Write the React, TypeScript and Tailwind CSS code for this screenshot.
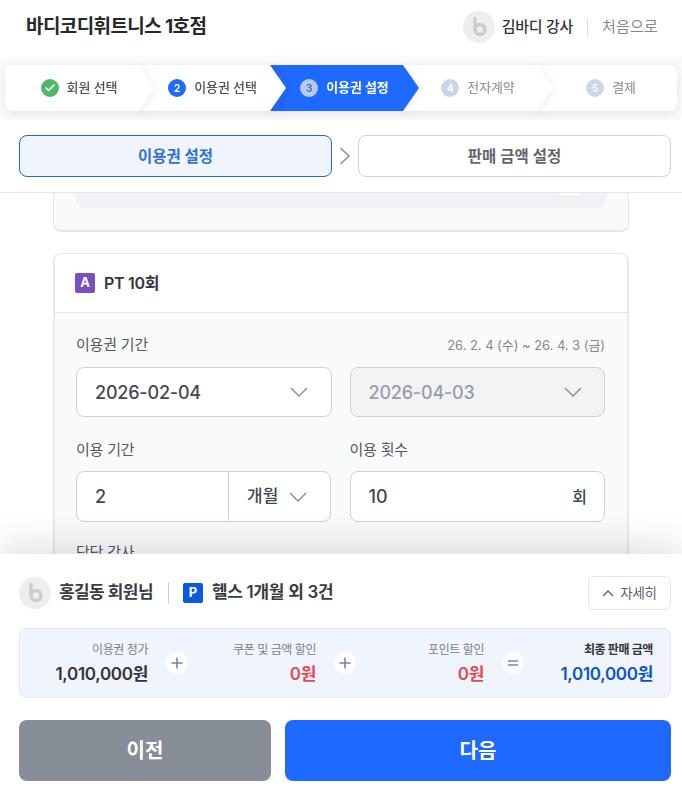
import React from "react";
import { Check } from "lucide-react";

const steps = [
  { id: 1, title: "회원 선택", state: "done", width: "w-[150px]", z: "z-[5]" },
  { id: 2, title: "이용권 선택", state: "passed", width: "w-[147px]", z: "z-[4]" },
  { id: 3, title: "이용권 설정", state: "active", width: "w-[149px]", z: "z-[3]" },
  { id: 4, title: "전자계약", state: "todo", width: "w-[150px]", z: "z-[2]" },
  { id: 5, title: "결제", state: "todo", width: "w-[140px]", z: "z-[1]" },
];

function LogoAvatar({ size }: { size: string }) {
  return (
    <svg viewBox="0 0 32 32" className={size}>
      <circle cx="16" cy="16" r="16" fill="#eeeeee" />
      <circle cx="17" cy="18.5" r="5" fill="none" stroke="#cccccc" strokeWidth="3.4" />
      <path d="M12 7.5V18.5" stroke="#cccccc" strokeWidth="3.4" strokeLinecap="round" />
    </svg>
  );
}

function Chevron({ className }: { className: string }) {
  return (
    <svg viewBox="0 0 18 10" fill="none" className={className}>
      <path d="M1 1L9 9L17 1" stroke="currentColor" strokeWidth="1.5" />
    </svg>
  );
}

function StepItem({ step }: { step: (typeof steps)[number] }) {
  const active = step.state === "active";
  const todo = step.state === "todo";
  return (
    <div className={`relative shrink-0 ${step.z} ${step.width} ${step.id > 1 ? "-ml-4" : ""} drop-shadow-[0_2px_5px_rgba(0,0,0,0.09)]`}>
      {step.id === 5 ? (
        <div className="flex h-[46px] items-center justify-center gap-2 rounded-r-lg bg-white pl-2 text-[13px] font-medium tracking-[-0.1px] text-[#9a9ea6]">
          <span className="flex size-[18px] items-center justify-center rounded-full bg-[#cdd6e8] text-[10px] font-bold text-white">{step.id}</span>
          <span>{step.title}</span>
        </div>
      ) : (
        <div
          className={`flex h-[46px] items-center justify-center gap-2 text-[13px] font-medium tracking-[-0.1px] [clip-path:polygon(0_0,calc(100%-16px)_0,100%_50%,calc(100%-16px)_100%,0_100%)] ${
            active ? "bg-[#1e69ff] font-semibold text-white" : "bg-white"
          } ${todo ? "text-[#9a9ea6]" : ""} ${step.state === "done" || step.state === "passed" ? "text-[#4e5159]" : ""} ${
            step.id === 1 ? "rounded-l-lg pr-[2px]" : ""
          }`}
        >
          {step.state === "done" ? (
            <span className="flex size-[18px] items-center justify-center rounded-full bg-[#4fb96b] text-white">
              <Check size={12} strokeWidth={3.5} />
            </span>
          ) : (
            <span
              className={`flex size-[18px] items-center justify-center rounded-full text-[10px] font-bold ${
                step.state === "passed" ? "bg-[#1e69ff] text-white" : ""
              } ${active ? "bg-[#bcc9e6] text-[#3f6fd6]" : ""} ${todo ? "bg-[#cdd6e8] text-white" : ""}`}
            >
              {step.id}
            </span>
          )}
          <span>{step.title}</span>
        </div>
      )}
    </div>
  );
}

function SelectBox({ value, disabled }: { value: string; disabled?: boolean }) {
  return (
    <div
      className={`flex h-[50px] items-center justify-between rounded-lg border border-[#cfd2d8] pl-[18px] text-[18px] font-medium tracking-[-0.2px] ${
        disabled ? "bg-[#f2f3f5] pr-[22px] text-[#9a9ea6]" : "bg-white pr-[23px] text-[#45484f]"
      }`}
    >
      <span>{value}</span>
      <Chevron className="h-[10px] w-[18px] text-[#8d9097]" />
    </div>
  );
}

function SummaryItem({ label, value, tone }: { label: string; value: string; tone: string }) {
  return (
    <div className="flex w-[128px] flex-col items-end">
      <span className="text-[12px] leading-[18px] tracking-[-0.45px] text-[#7d8087]">{label}</span>
      <span className={`mt-[3px] text-[17px] font-semibold leading-[24px] tracking-[-0.3px] ${tone}`}>{value}</span>
    </div>
  );
}

function Operator({ equals }: { equals?: boolean }) {
  return (
    <span className="ml-[18px] flex size-[22px] shrink-0 items-center justify-center rounded-full bg-white text-[#7188b8]">
      <svg viewBox="0 0 12 12" fill="none" className="size-3">
        {equals ? (
          <path d="M1 4H11M1 8H11" stroke="currentColor" strokeWidth="1.6" />
        ) : (
          <path d="M0.5 6H11.5M6 0.5V11.5" stroke="currentColor" strokeWidth="1.6" />
        )}
      </svg>
    </span>
  );
}

export default function App() {
  return (
    <div className="flex h-[801px] w-[682px] flex-col overflow-hidden bg-white font-['Inter','Noto_Sans_CJK_KR',sans-serif] text-[#2b2d33]">
      <header className="flex h-[56px] shrink-0 items-center justify-between pb-[2px] pl-[26px] pr-[24px]">
        <h1 className="text-[19px] font-bold tracking-[-0.6px] text-[#26282d]">바디코디휘트니스 1호점</h1>
        <div className="flex items-center">
          <LogoAvatar size="size-8" />
          <span className="ml-[7px] text-[15px] font-medium tracking-[-0.3px] text-[#33353a]">김바디 강사</span>
          <span className="ml-[14px] mr-[14px] h-[18px] w-px bg-[#dcdee2]" />
          <span className="text-[15px] tracking-[0.2px] text-[#85888f]">처음으로</span>
        </div>
      </header>

      <div className="flex h-[64px] shrink-0 items-center bg-[#fafafa] pl-[5px]">
        {steps.map((step) => (
          <StepItem key={step.id} step={step} />
        ))}
      </div>

      <div className="flex h-[73px] shrink-0 items-start border-b border-[#e4e6ea] pl-[19px] pt-[15px]">
        <button className="h-[42px] w-[313px] shrink-0 rounded-lg border border-[#1e69d8] bg-[#eff4fd] pt-px text-[15.5px] font-semibold text-[#2f6fd8]">
          이용권 설정
        </button>
        <svg viewBox="0 0 12 18" fill="none" className="ml-[7px] mr-[7px] mt-[12px] h-[18px] w-[12px] shrink-0 text-[#8d9097]">
          <path d="M1.5 1L10 9L1.5 17" stroke="currentColor" strokeWidth="1.6" />
        </svg>
        <button className="h-[42px] w-[313px] shrink-0 rounded-lg border border-[#cfd2d8] bg-white pt-px text-[15.5px] font-semibold text-[#63666d]">
          판매 금액 설정
        </button>
      </div>

      <main className="min-h-0 flex-1 overflow-hidden px-[53px]">
        <div className="h-[39px] rounded-b-lg border-x border-b-2 border-[#e4e6ea] bg-[#f9fafc] px-[22px]">
          <div className="flex h-[15px] justify-end rounded-b-lg bg-[#f0f2f6] pr-[23px]">
            <span className="h-[4px] w-[25px] rounded-b border-x border-b border-[#e4e6ea] bg-white" />
          </div>
        </div>

        <section className="mt-[21px] overflow-hidden rounded-t-lg border-x-2 border-t border-[#e8e9ec]">
          <div className="flex h-[59px] items-center gap-[9px] border-b border-[#e4e6ea] bg-white pl-[20px]">
            <span className="flex size-5 items-center justify-center rounded-[2px] bg-[#7a4fc4] text-[13px] font-bold text-white">A</span>
            <span className="text-[16px] font-semibold tracking-[-0.3px] text-[#33353a]">PT 10회</span>
          </div>
          <div className="grid grid-cols-2 gap-x-[18px] bg-[#f9fafc] pl-[21px] pr-[22px] pt-[21px]">
            <div className="col-span-2 flex items-center justify-between">
              <label className="text-[15px] leading-[22px] tracking-[-0.2px] text-[#54575e]">이용권 기간</label>
              <span className="text-[13px] leading-[22px] tracking-[-0.05px] text-[#85888f]">26. 2. 4 (수) ~ 26. 4. 3 (금)</span>
            </div>
            <div className="mt-[11px]">
              <SelectBox value="2026-02-04" />
            </div>
            <div className="mt-[11px]">
              <SelectBox value="2026-04-03" disabled />
            </div>
            <label className="mt-[22px] text-[15px] leading-[22px] tracking-[-0.2px] text-[#54575e]">이용 기간</label>
            <label className="mt-[22px] text-[15px] leading-[22px] tracking-[-0.2px] text-[#54575e]">이용 횟수</label>
            <div className="mt-[10px] flex h-[51px] w-[255px] items-center rounded-lg border border-[#cfd2d8] bg-white text-[#45484f]">
              <span className="flex-1 pl-[18px] text-[18px] font-medium">2</span>
              <div className="flex h-full w-[102px] items-center gap-[11px] border-l border-[#cfd2d8] pl-[18px] text-[17px] font-medium">
                <span>개월</span>
                <Chevron className="h-[10px] w-[18px] text-[#8d9097]" />
              </div>
            </div>
            <div className="mt-[10px] flex h-[51px] items-center justify-between rounded-lg border border-[#cfd2d8] bg-white pl-[18px] pr-[17px] text-[#45484f]">
              <span className="text-[18px] font-medium">10</span>
              <span className="text-[16px] font-medium">회</span>
            </div>
            <label className="col-span-2 mt-[20px] text-[15px] leading-[22px] tracking-[-0.2px] text-[#54575e]">담당 강사</label>
          </div>
        </section>
      </main>

      <footer className="relative z-10 flex h-[247px] shrink-0 flex-col bg-white pl-[19px] pr-[11px] shadow-[0_-8px_36px_rgba(0,0,0,0.13)]">
        <div className="mt-[22px] flex h-[34px] items-center">
          <LogoAvatar size="size-8" />
          <span className="ml-2 text-[17px] font-semibold tracking-[-0.6px] text-[#3a3c42]">홍길동 회원님</span>
          <span className="ml-[15px] mr-[14px] h-[22px] w-px bg-[#cfd2d8]" />
          <span className="flex size-5 items-center justify-center rounded-[2px] bg-[#0a5ae0] text-[13px] font-bold text-white">P</span>
          <span className="ml-[9px] text-[17px] font-semibold tracking-[-0.3px] text-[#3a3c42]">헬스 1개월 외 3건</span>
          <button className="ml-auto flex h-[34px] w-[83px] items-center justify-center gap-[6px] rounded-md border border-[#e4e6ea] text-[13.5px] tracking-[-0.2px] text-[#5f6269]">
            <svg viewBox="0 0 12 7" fill="none" className="h-[7px] w-[12px]">
              <path d="M1 6L6 1L11 6" stroke="currentColor" strokeWidth="1.4" />
            </svg>
            자세히
          </button>
        </div>

        <div className="mt-[18px] flex h-[70px] items-center rounded-lg border border-[#e4e7ee] bg-[#f0f4fd] pr-[17px]">
          <SummaryItem label="이용권 정가" value="1,010,000원" tone="text-[#33353a]" />
          <Operator />
          <SummaryItem label="쿠폰 및 금액 할인" value="0원" tone="text-[#e5484d]" />
          <Operator />
          <SummaryItem label="포인트 할인" value="0원" tone="text-[#e5484d]" />
          <Operator equals />
          <div className="ml-auto flex flex-col items-end">
            <span className="text-[12px] font-semibold leading-[18px] tracking-[-0.4px] text-[#33353a]">최종 판매 금액</span>
            <span className="mt-[3px] text-[17px] font-semibold leading-[24px] tracking-[-0.3px] text-[#0a55c8]">1,010,000원</span>
          </div>
        </div>

        <div className="mt-[22px] flex gap-[14px]">
          <button className="h-[61px] w-[252px] rounded-lg bg-[#878e98] text-[20px] font-bold text-white">이전</button>
          <button className="h-[61px] w-[386px] rounded-lg bg-[#1e69ff] text-[20px] font-bold text-white">다음</button>
        </div>
      </footer>
    </div>
  );
}
